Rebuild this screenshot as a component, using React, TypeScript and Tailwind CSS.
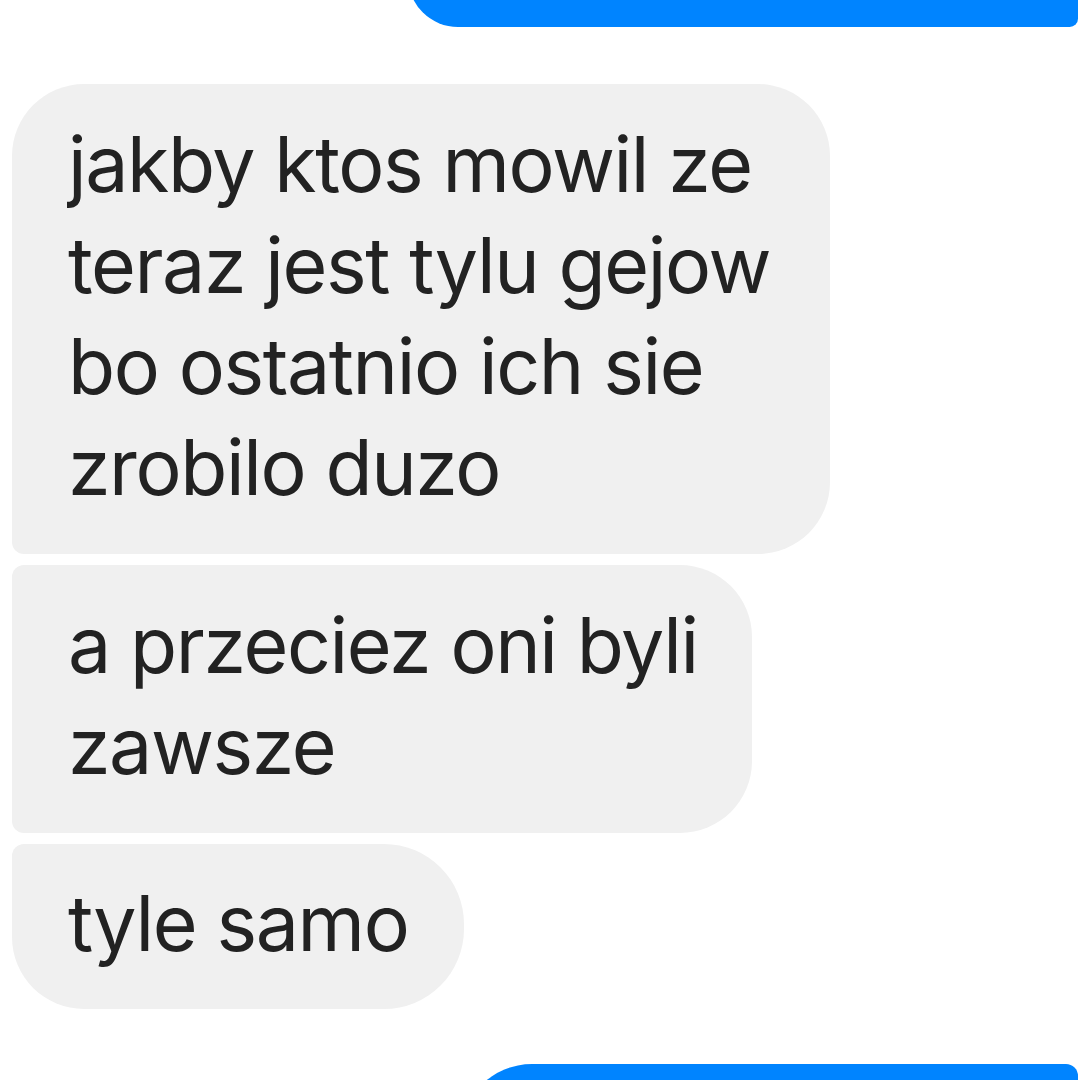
import React from "react";

const font = { fontFamily: "Inter, 'Noto Sans', sans-serif" };

function Lines({ lines }: { lines: string[] }) {
  return (
    <>
      {lines.map((l, i) => (
        <div key={i} className="whitespace-nowrap">
          {l}
        </div>
      ))}
    </>
  );
}

export default function App() {
  return (
    <div
      className="relative h-[1080px] w-[1080px] overflow-hidden bg-white"
      style={font}
    >
      <div className="flex flex-col">
        <div className="ml-[408px] mt-[-73px] h-[100px] w-[670px] rounded-tl-[72px] rounded-tr-[12px] rounded-bl-[72px] rounded-br-[12px] bg-[#0084ff]" />

        <div className="mt-[57px] flex flex-col gap-[11px] pl-[12px] text-[77px] leading-[101px] tracking-[-1.4px] text-[#222222]">
          <div className="w-[818px] rounded-tl-[72px] rounded-tr-[72px] rounded-br-[72px] rounded-bl-[12px] bg-[#f0f0f0] pt-[30px] pb-[36px] pl-[56px]">
            <Lines
              lines={[
                "jakby ktos mowil ze",
                "teraz jest tylu gejow",
                "bo ostatnio ich sie",
                "zrobilo duzo",
              ]}
            />
          </div>
          <div className="w-[740px] rounded-tl-[12px] rounded-tr-[72px] rounded-br-[72px] rounded-bl-[12px] bg-[#f0f0f0] pt-[30px] pb-[36px] pl-[56px]">
            <Lines lines={["a przeciez oni byli", "zawsze"]} />
          </div>
          <div className="w-[452px] rounded-tl-[12px] rounded-tr-[80px] rounded-br-[80px] rounded-bl-[72px] bg-[#f0f0f0] pt-[29px] pb-[35px] pl-[56px]">
            <Lines lines={["tyle samo"]} />
          </div>
        </div>

        <div className="ml-[460px] mt-[55px] h-[100px] w-[618px] rounded-tl-[72px] rounded-tr-[12px] bg-[#0084ff]" />
      </div>
    </div>
  );
}
